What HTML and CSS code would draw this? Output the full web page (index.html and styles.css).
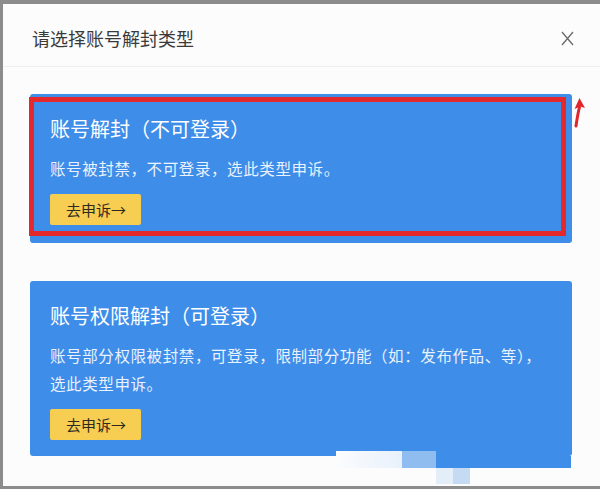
FILE: index.html
```html
<!DOCTYPE html>
<html lang="zh-CN">
<head>
<meta charset="utf-8">
<title>请选择账号解封类型</title>
<link rel="stylesheet" href="styles.css">
</head>
<body>
<div class="dialog">
  <div class="header">
    <div class="title">请选择账号解封类型</div>
    <svg class="close" width="13" height="15" viewBox="0 0 13 15"><path d="M1 1 L12 14 M12 1 L1 14" stroke="#6b6b6b" stroke-width="1.3" fill="none"/></svg>
  </div>
  <div class="body">
    <div class="card card-first">
      <div class="card-title">账号解封（不可登录）</div>
      <div class="card-desc">账号被封禁，不可登录，选此类型申诉。</div>
      <div class="btn">去申诉→</div>
      <div class="highlight"></div>
    </div>
    <div class="card card-second">
      <div class="card-title">账号权限解封（可登录）</div>
      <div class="card-desc">账号部分权限被封禁，可登录，限制部分功能（如：发布作品、等），<br>选此类型申诉。</div>
      <div class="btn">去申诉→</div>
      <div class="smear smear-a"></div>
      <div class="smear smear-e"></div>
      <div class="smear smear-b"></div>
      <div class="smear smear-c"></div>
      <div class="smear smear-d"></div>
    </div>
  </div>
  <svg class="arrow" width="16" height="32" viewBox="0 0 16 32"><path d="M5 29 C6 22 7 16 8.5 10" stroke="#e0262a" stroke-width="3" fill="none" stroke-linecap="round"/><path d="M8.5 1 L14 11 L9.5 9.5 L3.5 12 Z" fill="#e0262a"/></svg>
</div>
</body>
</html>
```
FILE: styles.css
```css
html, body {
  margin: 0;
  padding: 0;
}
body {
  background: #8c8c8c;
  width: 600px;
  height: 489px;
  overflow: hidden;
  font-family: "Noto Sans CJK SC", "Noto Sans", sans-serif;
}
.dialog {
  position: relative;
  margin: 4px 0 0 3px;
  height: 482px;
  background: #fcfcfd;
}
.header {
  box-sizing: border-box;
  height: 63px;
  padding: 6px 26px 0 29px;
  display: flex;
  align-items: center;
  justify-content: space-between;
  border-bottom: 1px solid #efeff2;
}
.title {
  font-size: 18px;
  color: #3a3a3a;
  line-height: 24px;
}
.close {
  display: block;
}
.body {
  padding: 27px 28px 0 27px;
  display: flex;
  flex-direction: column;
  gap: 38px;
}
.card {
  position: relative;
  background: #3e8de9;
  border-radius: 3px;
  padding: 21px 20px 18px 20px;
  color: #fff;
}
.card-second {
  padding-bottom: 16px;
}
.card-title {
  font-size: 20px;
  line-height: 28px;
}
.card-desc {
  margin-top: 11px;
  font-size: 15.5px;
  line-height: 28px;
  letter-spacing: 0.6px;
  color: #eaf2fd;
  white-space: nowrap;
}
.btn {
  margin-top: 12px;
  display: inline-block;
  height: 31px;
  line-height: 31px;
  padding: 0 15px 0 16px;
  background: #f7cd52;
  color: #2e2a20;
  font-size: 15px;
  border-radius: 2px;
}
.highlight {
  position: absolute;
  left: -1px;
  top: 3px;
  right: 6px;
  bottom: 7px;
  border: 5px solid #e5282b;
  pointer-events: none;
}
.smear {
  position: absolute;
}
.smear-a {
  left: 406px;
  top: 175px;
  width: 135px;
  height: 12px;
  background: #3e8de9;
}
.smear-e {
  left: 306px;
  top: 170px;
  width: 66px;
  height: 17px;
  background: linear-gradient(to right, #fbfcfe, #e8f1fb);
}
.smear-b {
  left: 372px;
  top: 170px;
  width: 34px;
  height: 17px;
  background: #8fbdf0;
}
.smear-c {
  left: 406px;
  top: 187px;
  width: 17px;
  height: 16px;
  background: #e4eef9;
}
.smear-d {
  left: 423px;
  top: 187px;
  width: 17px;
  height: 16px;
  background: #c5dbf3;
}
.arrow {
  position: absolute;
  left: 568px;
  top: 93px;
}
```
